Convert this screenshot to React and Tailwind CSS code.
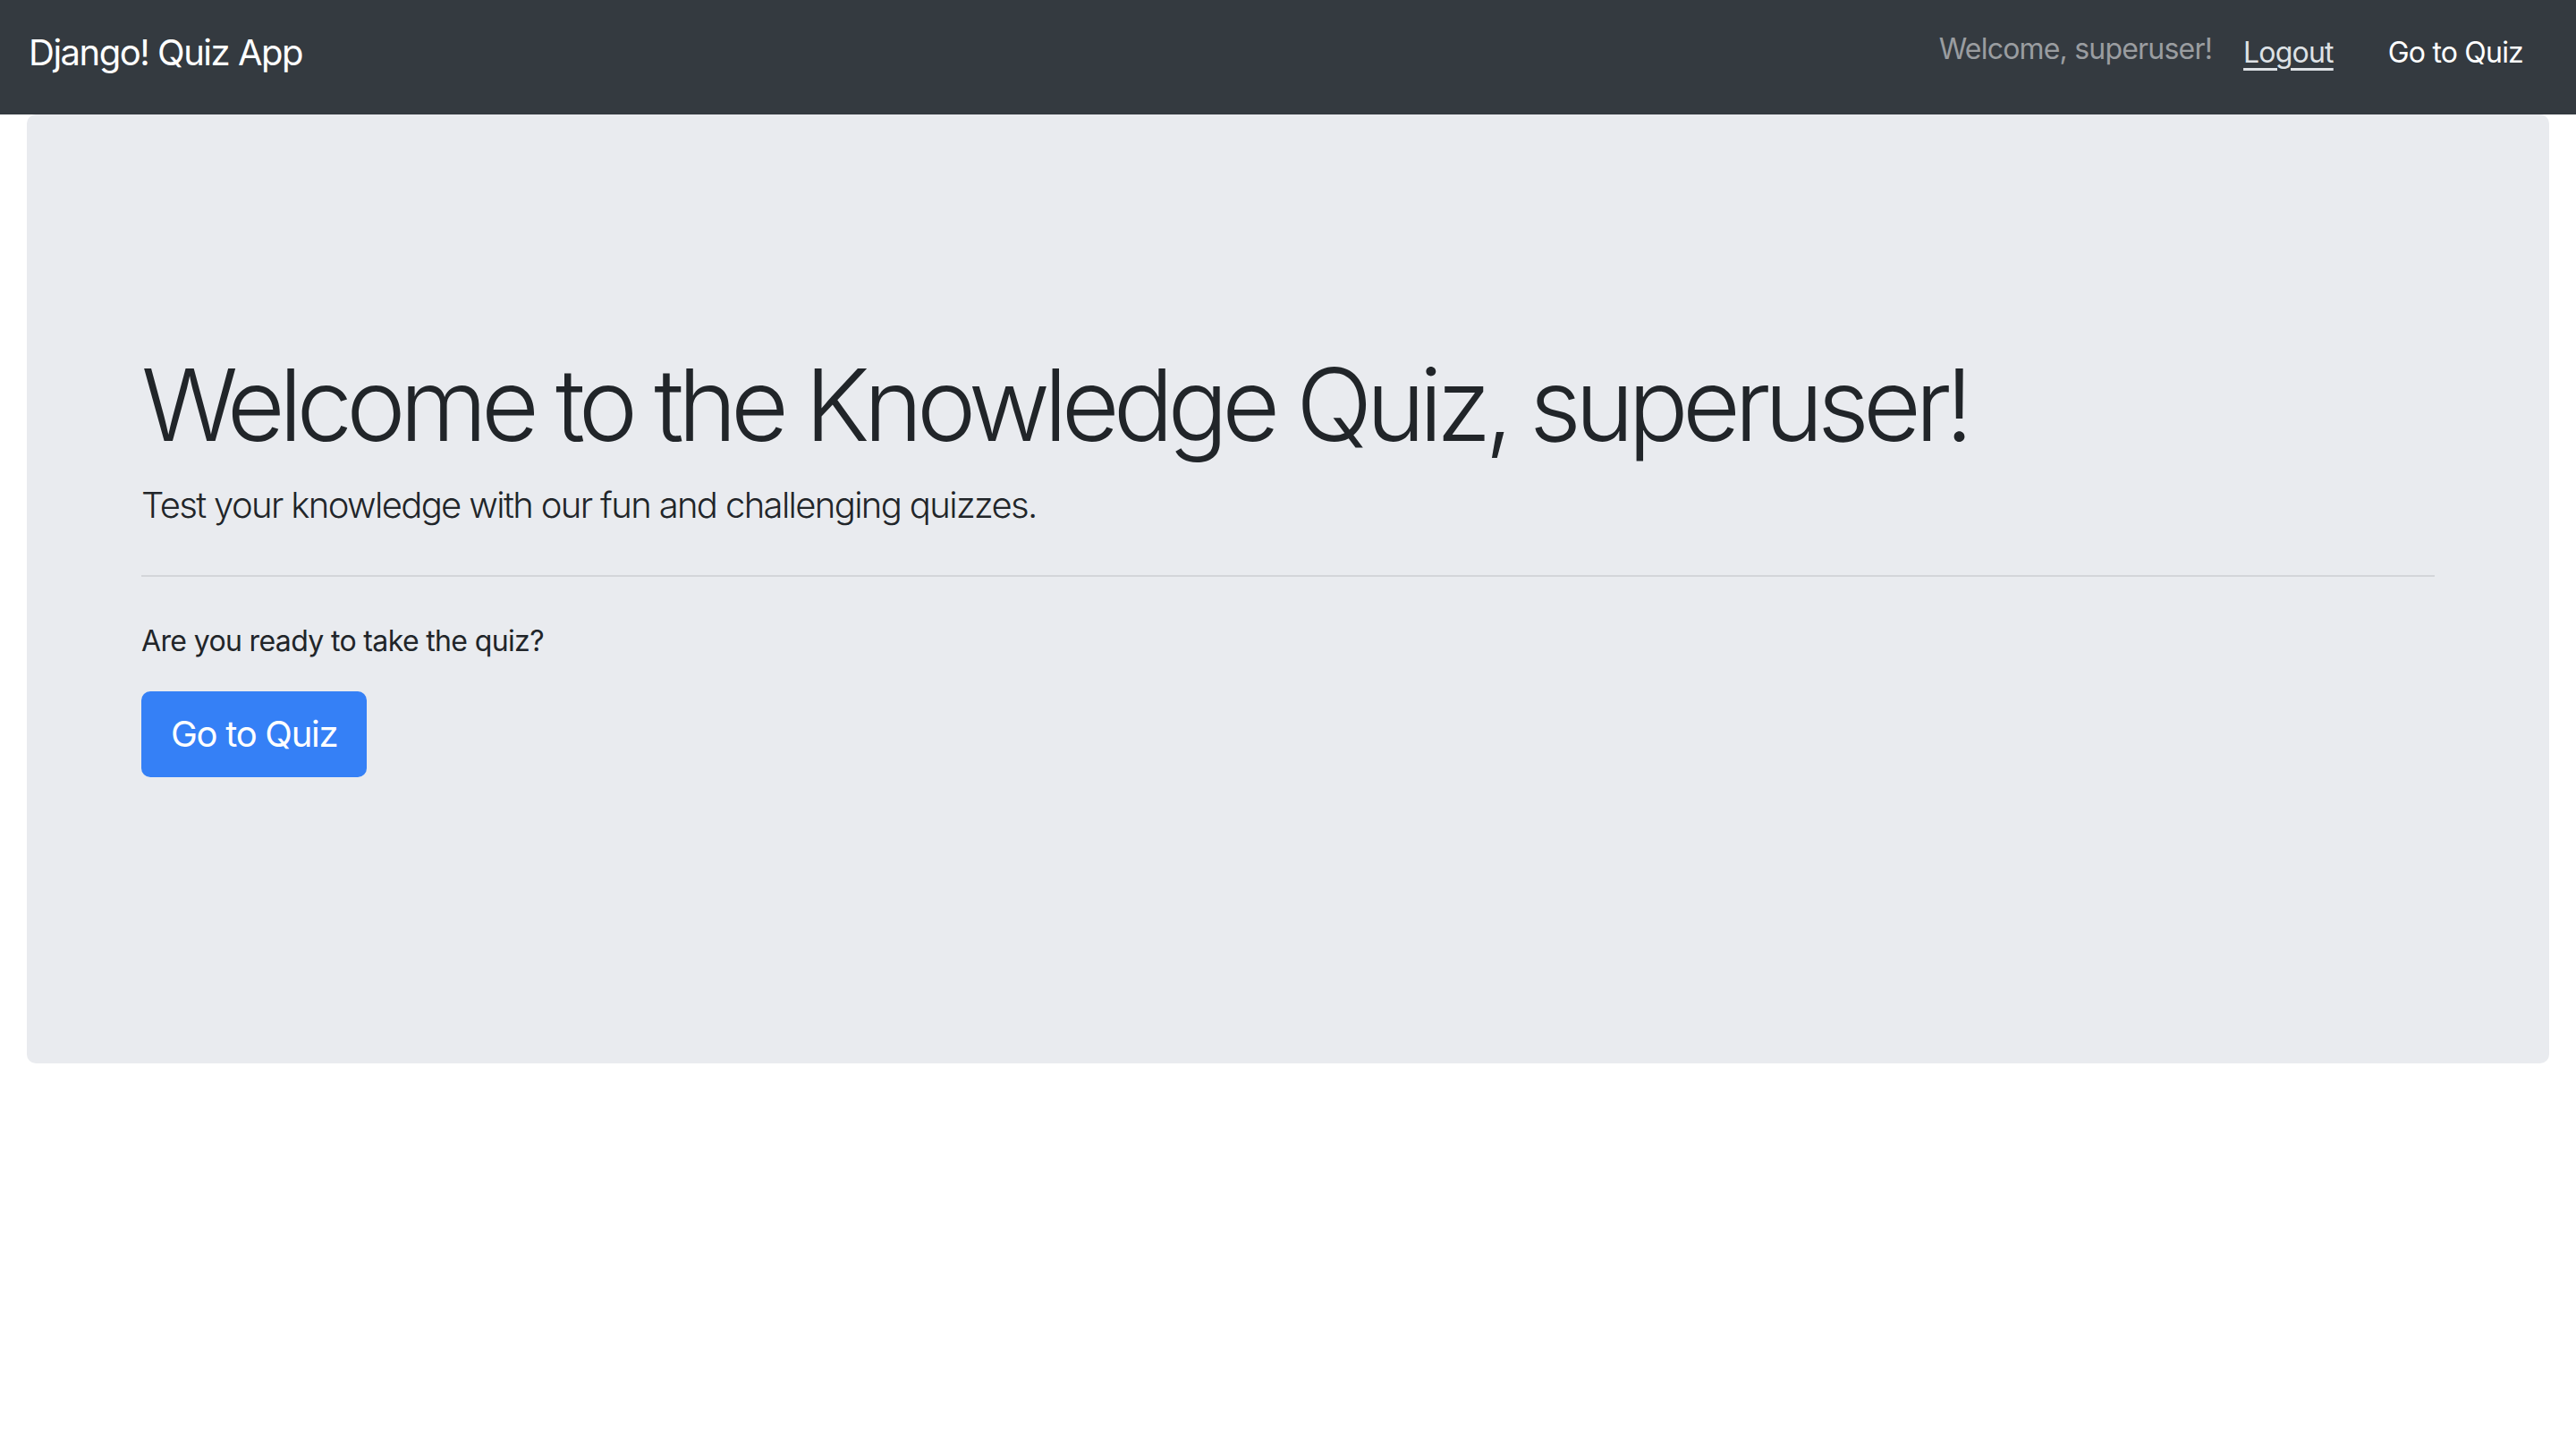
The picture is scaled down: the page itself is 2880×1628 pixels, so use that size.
export default function App() {
  return (
    <div className="min-h-screen bg-white font-['Inter','Liberation_Sans',sans-serif] text-[#212529]">
      <nav className="flex h-[128px] items-center justify-between bg-[#343a40] pb-[11px] pl-[32px] pr-[59px]">
        <span className="text-[40px] leading-[60px] tracking-[-0.037em] text-white">Django! Quiz App</span>
        <div className="flex items-center">
          <span className="mb-[8px] text-[32px] leading-[48px] tracking-[-0.025em] text-[#9a9da0]">
            Welcome, superuser!
          </span>
          <a
            href="#"
            className="ml-[35px] text-[32px] leading-[48px] tracking-[-0.025em] text-[#dee2e6] underline underline-offset-[6px]"
          >
            Logout
          </a>
          <a href="#" className="ml-[61px] text-[32px] leading-[48px] tracking-[-0.025em] text-white">
            Go to Quiz
          </a>
        </div>
      </nav>

      <main className="mx-[30px] rounded-[10px] bg-[#e9ebef] px-[128px] pb-[320px] pt-[257px]">
        <h1 className="mb-[16px] text-[112px] font-light leading-[1.2] tracking-[-0.06em]">
          Welcome to the Knowledge Quiz, superuser!
        </h1>
        <p className="mb-[48px] text-[40px] font-light leading-[60px] tracking-[-0.041em]">
          Test your knowledge with our fun and challenging quizzes.
        </p>
        <hr className="mb-[48px] border-t-2 border-[#d3d5d9]" />
        <p className="mb-[32px] text-[32px] leading-[48px] tracking-[-0.02em]">Are you ready to take the quiz?</p>
        <a
          href="#"
          className="inline-flex h-[96px] items-center rounded-[10px] bg-[#3580f6] px-[33px] text-[40px] tracking-[-0.032em] text-white"
        >
          Go to Quiz
        </a>
      </main>
    </div>
  );
}
